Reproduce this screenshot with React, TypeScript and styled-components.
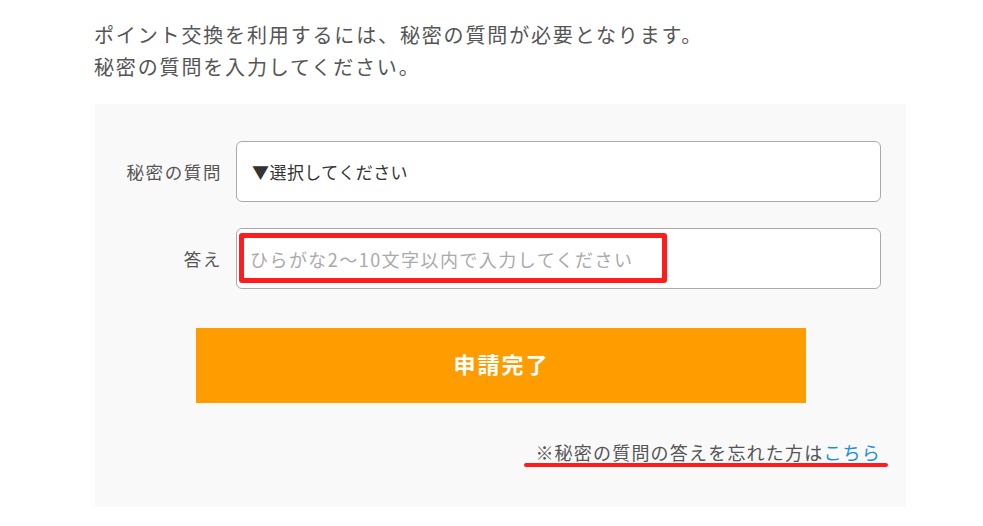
import React from "react";
import styled, { createGlobalStyle } from "styled-components";

const GlobalStyle = createGlobalStyle`
  html, body {
    margin: 0;
    padding: 0;
    background: #ffffff;
  }
  body {
    font-family: "Noto Sans CJK JP", "Noto Sans", sans-serif;
    color: #555555;
  }
  * { box-sizing: border-box; }
`;

const Page = styled.div`
  width: 983px;
  height: 526px;
  overflow: hidden;
  padding: 19px 0 0 94px;
`;

const Intro = styled.p`
  margin: 0 0 21px;
  font-size: 20px;
  line-height: 32px;
  letter-spacing: 1.85px;
  color: #555555;
`;

const Panel = styled.section`
  width: 811px;
  margin-left: 1px;
  background: #f9f9f9;
  padding: 37px 25px 43px 25px;
  display: flex;
  flex-direction: column;
`;

const FormGrid = styled.div`
  display: grid;
  grid-template-columns: 102px 1fr;
  column-gap: 14px;
  row-gap: 26px;
  align-items: center;
`;

const Label = styled.label`
  text-align: right;
  font-size: 17.5px;
  letter-spacing: 1.6px;
  color: #555555;
  white-space: nowrap;
`;

const FieldWrap = styled.div`
  position: relative;
`;

const Field = styled.div<{ $placeholder?: boolean }>`
  height: 61px;
  background: #ffffff;
  border: 1px solid #aaaaaa;
  border-radius: 6px;
  display: flex;
  align-items: center;
  padding-left: ${(p) => (p.$placeholder ? "13px" : "15px")};
  font-size: ${(p) => (p.$placeholder ? "18px" : "17px")};
  letter-spacing: ${(p) => (p.$placeholder ? "1.45px" : "0.45px")};
  color: ${(p) => (p.$placeholder ? "#aaaaaa" : "#333333")};
`;

const Highlight = styled.div`
  position: absolute;
  left: 3px;
  top: 5px;
  width: 428px;
  height: 50px;
  border: 5px solid #ff1c1c;
  border-radius: 3px;
  pointer-events: none;
`;

const SubmitButton = styled.button`
  align-self: center;
  margin-top: 39px;
  width: 610px;
  height: 75px;
  padding: 0 0 6px 2px;
  background: #ff9d00;
  border: none;
  color: #ffffff;
  font-family: "Noto Sans CJK JP", sans-serif;
  font-size: 22px;
  font-weight: bold;
  letter-spacing: 2px;
  cursor: pointer;
`;

const NoteRow = styled.div`
  display: flex;
  justify-content: flex-end;
  margin-top: 37px;
`;

const Note = styled.span`
  position: relative;
  font-size: 18px;
  line-height: 24px;
  letter-spacing: 1.2px;
  color: #555555;
  &::after {
    content: "";
    position: absolute;
    left: -11px;
    right: -7px;
    bottom: -3px;
    height: 4px;
    border-radius: 2px;
    background: #ff1c1c;
  }
`;

const Link = styled.a`
  color: #1e90d8;
  text-decoration: none;
`;

export default function App() {
  return (
    <>
      <GlobalStyle />
      <Page>
        <Intro>
          ポイント交換を利用するには、秘密の質問が必要となります。
          <br />
          秘密の質問を入力してください。
        </Intro>
        <Panel>
          <FormGrid>
            <Label>秘密の質問</Label>
            <FieldWrap>
              <Field>▼選択してください</Field>
            </FieldWrap>
            <Label>答え</Label>
            <FieldWrap>
              <Field $placeholder>ひらがな2〜10文字以内で入力してください</Field>
              <Highlight />
            </FieldWrap>
          </FormGrid>
          <SubmitButton>申請完了</SubmitButton>
          <NoteRow>
            <Note>
              ※秘密の質問の答えを忘れた方は<Link href="#">こちら</Link>
            </Note>
          </NoteRow>
        </Panel>
      </Page>
    </>
  );
}
